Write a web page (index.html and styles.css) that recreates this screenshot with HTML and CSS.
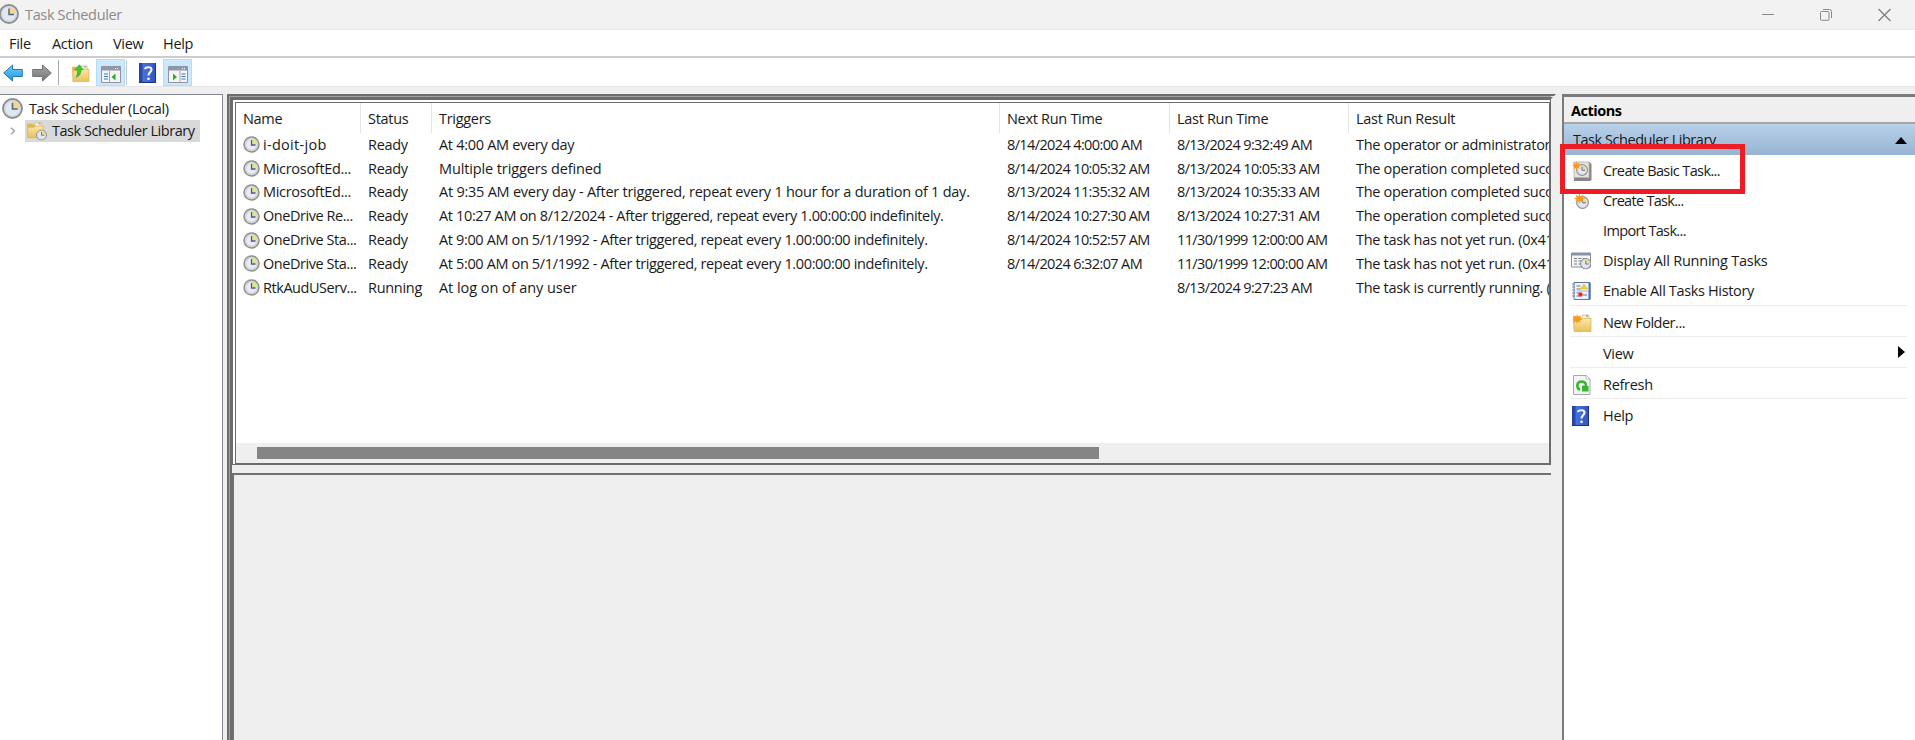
FILE: index.html
```
<!DOCTYPE html>
<html lang="en">
<head>
<meta charset="utf-8">
<title>Task Scheduler</title>
<link rel="stylesheet" href="styles.css">
</head>
<body>
<svg class="defs" width="0" height="0">
  <defs>
    <linearGradient id="gFolder" x1="0" y1="0" x2="0" y2="1"><stop offset="0" stop-color="#fbe8a6"/><stop offset="1" stop-color="#e9c05f"/></linearGradient>
    <linearGradient id="gBook" x1="0" y1="0" x2="1" y2="0"><stop offset="0" stop-color="#243f9c"/><stop offset=".2" stop-color="#2c4fb6"/><stop offset=".22" stop-color="#4a72dc"/><stop offset="1" stop-color="#2f53c0"/></linearGradient>
    <linearGradient id="gBlue" x1="0" y1="0" x2="0" y2="1"><stop offset="0" stop-color="#7cd0fa"/><stop offset="1" stop-color="#1795e6"/></linearGradient>
    <linearGradient id="gGrey" x1="0" y1="0" x2="0" y2="1"><stop offset="0" stop-color="#a8a8a8"/><stop offset="1" stop-color="#747474"/></linearGradient>
    <symbol id="clock" viewBox="0 0 20 20"><circle cx="10" cy="10" r="9" fill="#e3e8ee" stroke="#8b8d90" stroke-width="1.8"/><circle cx="10" cy="10" r="7.3" fill="#dfe8f3" stroke="#c9ced4" stroke-width=".8"/><path d="M10 10V3a7 7 0 0 1 7 7z" fill="#f8d68b"/><path d="M10 4.500V10.500H15" fill="none" stroke="#56677d" stroke-width="1.500"/></symbol>
    <symbol id="task" viewBox="0 0 17 17"><circle cx="8.500" cy="8.500" r="7.500" fill="#dcdcde" stroke="#929292" stroke-width="1.500"/><circle cx="8.500" cy="8.500" r="5.700" fill="#e9ecf2" stroke="#c6c6ca" stroke-width=".8"/><path d="M8.500 8.500V3a5.600 5.600 0 0 1 5.600 5.500z" fill="#d3ec86"/><path d="M8.500 4V9H12.500" fill="none" stroke="#5750a0" stroke-width="1.300"/></symbol>
    <symbol id="folder" viewBox="0 0 20 20"><path d="M1 3h7l1.500 2H18v13H2z" fill="#e4b654"/><path d="M10 2h7v5h-7z" fill="#f5f3e6" stroke="#d5b568" stroke-width=".7"/><path d="M14 3h2" stroke="#6fa6d8" stroke-width="1.300"/><path d="M2 7h7l2-1.500h8V18.500H2z" fill="url(#gFolder)" stroke="#ddb14e" stroke-width=".7"/></symbol>
    <symbol id="star" viewBox="0 0 12 12"><path d="M6 0l1 3.500L10.500 1.500 9 5l3 1-3 1.300 1.500 3.200L7 9 6 12 4.800 9 1.500 10.500 3 7.300 0 6l3-1L1.500 1.500 5 3.500z" fill="#f99a1c"/></symbol>
    <symbol id="help" viewBox="0 0 17 20"><path d="M0 0h17v20H0z" fill="url(#gBook)"/><path d="M0 19h17v1H0zM16 0h1v20h-1z" fill="#1d3376"/><path d="M6 6.200C6.300 3.700 12.500 3.300 12.500 6.600 12.500 9.300 9.500 9 9.500 12.500" fill="none" stroke="#eef2ff" stroke-width="2.200"/><circle cx="9.500" cy="15.800" r="1.400" fill="#eef2ff"/></symbol>
  </defs>
</svg>
<div class="window">
  <header class="titlebar">
    <svg class="app-icon" width="20" height="20"><use href="#clock"/></svg>
    <span class="app-title">Task Scheduler</span>
    <div class="controls">
      <svg width="12" height="14" viewBox="0 0 12 14"><path d="M0 6.500h12" stroke="#8a8a8a"/></svg>
      <svg width="12" height="14" viewBox="0 0 12 14" fill="none" stroke="#8a8a8a"><rect x=".5" y="3.500" width="8.500" height="8.800" rx="1"/><path d="M3 1.500h6.500a2 2 0 0 1 2 2V10"/></svg>
      <svg width="13" height="14" viewBox="0 0 13 14"><path d="M.5 1l12 12m0-12l-12 12" stroke="#7d7d7d" stroke-width="1.200"/></svg>
    </div>
  </header>
  <nav class="menubar"><span class="m-file">File</span><span class="m-action">Action</span><span class="m-view">View</span><span class="m-help">Help</span></nav>
  <div class="toolbar">
    <svg class="t-back" width="20" height="18" viewBox="0 0 20 18"><path d="M.7 9L9.500 1v4.500H19.300v7H9.500V17z" fill="url(#gBlue)" stroke="#2879ad" stroke-width="1"/></svg>
    <svg class="t-fwd" width="20" height="18" viewBox="0 0 20 18"><path d="M19.300 9L10.500 1v4.500H.7v7h9.800V17z" fill="url(#gGrey)" stroke="#747474" stroke-width="1"/></svg>
    <i class="t-sep"></i>
    <svg class="t-up" width="19" height="19" viewBox="0 0 20 20"><use href="#folder" width="20" height="20"/><path d="M4.500 14C8 13 9.500 10 9.500 6H12L7.800.8 3 6h2.800C6 9 5.500 11.500 4.500 14z" transform="translate(1 0)" fill="#3fc52f" stroke="#2da322" stroke-width=".6"/></svg>
    <span class="t-on"><svg width="20" height="17" viewBox="0 0 20 17"><path d="M.5.5h19v16H.5z" fill="#f5f5f5" stroke="#8b949f"/><path d="M1 1h18v3.500H1z" fill="#8e99a8"/><path d="M14 2.500h1m1 0h1" stroke="#fff"/><path d="M3 8h4m-4 2.500h4M3 13h4" stroke="#3f76b5" stroke-width="1.200"/><path d="M8.500 5v11.500" stroke="#9da6b2"/><path d="M14.500 7.500v7l-4-3.500z" fill="#2ead27"/></svg></span>
    <i class="t-sep2"></i>
    <svg class="t-help" width="17" height="20"><use href="#help"/></svg>
    <span class="t-on"><svg width="20" height="17" viewBox="0 0 20 17"><path d="M.5.5h19v16H.5z" fill="#f5f5f5" stroke="#8b949f"/><path d="M1 1h18v3.500H1z" fill="#8e99a8"/><path d="M14 2.500h1m1 0h1" stroke="#fff"/><path d="M13.500 8h4m-4 2.500h4m-4 2.500h4" stroke="#3f76b5" stroke-width="1.200"/><path d="M12 5v11.500" stroke="#9da6b2"/><path d="M5 7.500v7l4-3.500z" fill="#2ead27"/></svg></span>
  </div>
  <main class="panes">
    <aside class="tree">
      <div class="root"><svg width="21" height="21"><use href="#clock"/></svg><span class="tree-root">Task Scheduler (Local)</span></div>
      <div class="child"><svg class="chev" width="6" height="8" viewBox="0 0 6 8"><path d="M1 .8L4.500 4 1 7.200" fill="none" stroke="#999" stroke-width="1.200"/></svg>
        <div class="sel"><svg width="21" height="20" viewBox="0 0 21 20"><use href="#folder" width="18" height="18"/><use href="#clock" x="10" y="8.500" width="11" height="11"/></svg><span class="tree-lib">Task Scheduler Library</span></div></div>
    </aside>
    <section class="center">
      <div class="list">
        <div class="row head"><span>Name</span><span>Status</span><span>Triggers</span><span>Next Run Time</span><span>Last Run Time</span><span>Last Run Result</span></div>
        <div class="rows">
          <div class="row"><span class="name loose"><svg><use href="#task"/></svg>i-doit-job</span><span>Ready</span><span>At 4:00 AM every day</span><span class="date">8/14/2024 4:00:00 AM</span><span class="date">8/13/2024 9:32:49 AM</span><span class="result">The operator or administrator</span></div>
          <div class="row"><span class="name"><svg><use href="#task"/></svg>MicrosoftEd...</span><span>Ready</span><span class="trig-words">Multiple triggers defined</span><span class="date">8/14/2024 10:05:32 AM</span><span class="date">8/13/2024 10:05:33 AM</span><span class="result">The operation completed successfully.</span></div>
          <div class="row"><span class="name"><svg><use href="#task"/></svg>MicrosoftEd...</span><span>Ready</span><span class="trig-daily">At 9:35 AM every day - After triggered, repeat every 1 hour for a duration of 1 day.</span><span class="date">8/13/2024 11:35:32 AM</span><span class="date">8/13/2024 10:35:33 AM</span><span class="result">The operation completed successfully.</span></div>
          <div class="row"><span class="name tight"><svg><use href="#task"/></svg>OneDrive Re...</span><span>Ready</span><span class="trig">At 10:27 AM on 8/12/2024 - After triggered, repeat every 1.00:00:00 indefinitely.</span><span class="date">8/14/2024 10:27:30 AM</span><span class="date">8/13/2024 10:27:31 AM</span><span class="result">The operation completed successfully.</span></div>
          <div class="row"><span class="name tight"><svg><use href="#task"/></svg>OneDrive Sta...</span><span>Ready</span><span class="trig">At 9:00 AM on 5/1/1992 - After triggered, repeat every 1.00:00:00 indefinitely.</span><span class="date">8/14/2024 10:52:57 AM</span><span class="date">11/30/1999 12:00:00 AM</span><span class="result">The task has not yet run. (0x41303)</span></div>
          <div class="row"><span class="name tight"><svg><use href="#task"/></svg>OneDrive Sta...</span><span>Ready</span><span class="trig">At 5:00 AM on 5/1/1992 - After triggered, repeat every 1.00:00:00 indefinitely.</span><span class="date">8/14/2024 6:32:07 AM</span><span class="date">11/30/1999 12:00:00 AM</span><span class="result">The task has not yet run. (0x41303)</span></div>
          <div class="row"><span class="name tight"><svg><use href="#task"/></svg>RtkAudUServ...</span><span>Running</span><span class="trig-logon">At log on of any user</span><span class="date"></span><span class="date">8/13/2024 9:27:23 AM</span><span class="result">The task is currently running. (0x41301)</span></div>
        </div>
        <div class="scroll"><div class="thumb"></div></div>
      </div>
      <div class="detail"></div>
    </section>
    <aside class="actions">
      <h2>Actions</h2>
      <div class="group"><span>Task Scheduler Library</span><svg width="12" height="7" viewBox="0 0 12 7"><path d="M6 0l6 7H0z"/></svg></div>
      <ul>
        <li><svg width="20" height="20" viewBox="0 0 20 20"><path d="M2.500 1h15l2 2v16l-1.500 1H2z" fill="#8c8583"/><path d="M2 1h15v15.500H2z" fill="#e6e3e0" stroke="#b4aeab" stroke-width=".8"/><use href="#clock" x="4" y="3" width="12" height="12"/><use href="#star" width="9" height="9"/></svg><span class="a-basic">Create Basic Task...</span></li>
        <li><svg width="20" height="20" viewBox="0 0 20 20"><use href="#clock" x="4" y="5" width="13" height="13"/><use href="#star" x="2" y="2" width="11" height="11"/></svg><span class="a-create">Create Task...</span></li>
        <li><svg width="20" height="20"></svg><span class="a-import">Import Task...</span></li>
        <li><svg class="wide-icon" width="20" height="20" viewBox="0 0 20 20"><path d="M.5 2h19v14H.5z" fill="#f4f6f8" stroke="#8a8f96"/><path d="M1 2h18v2.500H1z" fill="#8593a8"/><path d="M3 7.500h3m1.500 0h3m1.500 0h4M3 10h3m1.500 0h3M3 13h3m1.500 0h3" stroke="#747c87"/><use href="#clock" x="9" y="7" width="11.500" height="11.500"/></svg><span class="a-display">Display All Running Tasks</span></li>
        <li class="end"><svg width="20" height="20" viewBox="0 0 20 20"><path d="M2 1.500h16v17H2z" fill="#f1f4fa" stroke="#5877ae"/><path d="M16.500 2h2v16h-2z" fill="#4672b8"/><path d="M0 3h3M0 6h3M0 9h3M0 12h3M0 15h3" stroke="#818b99"/><path d="M4.500 5h4m-4 3h4m-4 4h3m-3 3h3" stroke="#6479a0"/><path d="M12 3l3.500 5h-7z" fill="#f5cf27" stroke="#dca91d" stroke-width=".5"/><path d="M5 10h11" stroke="#aab4c5"/><circle cx="8.500" cy="13.500" r="2.200" fill="#dd302b"/><path d="M11 14h4" stroke="#6479a0"/></svg><span class="a-enable">Enable All Tasks History</span></li>
        <li class="sep"><svg width="20" height="20" viewBox="0 0 20 20"><use href="#folder" width="20" height="20"/><use href="#star" y="1" width="10" height="10"/></svg><span class="a-new">New Folder...</span></li>
        <li class="sep"><svg width="20" height="20"></svg><span class="a-view">View</span><svg class="sub" width="7" height="12" viewBox="0 0 7 12"><path d="M0 0l7 6-7 6z"/></svg></li>
        <li class="sep"><svg width="20" height="20" viewBox="0 0 20 20"><path d="M1.500.5h13L18 4v15.500H1.500z" fill="#f4f5f6" stroke="#a3aaae"/><path d="M14 .5V4h4" fill="#fff" stroke="#a3aaae" stroke-width=".7"/><path d="M8 15C4 13 4.500 6.500 9.500 6.500c4.500 0 5.500 4 3.500 6.500" fill="none" stroke="#35b62d" stroke-width="2.500"/><path d="M10 10.500L16.500 11v5.500H10z" fill="#35b62d"/></svg><span class="a-refresh">Refresh</span></li>
        <li class="sep"><svg width="20" height="20" viewBox="0 0 20 20"><use href="#help" width="17" height="20"/></svg><span class="a-help">Help</span></li>
      </ul>
      <div class="highlight"></div>
    </aside>
  </main>
</div>
</body>
</html>
```
FILE: styles.css
```
* { box-sizing: border-box; }
body { margin: 0; font: 14.5px/20px "Open Sans", "Noto Sans", sans-serif; color: #1a1a1a; letter-spacing: -0.3px; overflow: hidden; }
.defs { position: absolute; }
svg { display: block; flex: none; }
span { white-space: nowrap; }
.window { width: 1915px; height: 740px; display: flex; flex-direction: column; background: #efefef; }

.titlebar { height: 30px; display: flex; align-items: center; background: #f2f2f2; border-bottom: 1px solid #e9e9e9; color: #8b8b8b; padding-right: 24px; }
.app-icon { margin: -2px 0 0 -1px; }
.app-title { margin-left: 6px; letter-spacing: -0.35px; }
.controls { margin-left: auto; display: flex; gap: 46px; }
.menubar { height: 28px; display: flex; align-items: center; background: #fff; border-bottom: 2px solid #ccccd0; padding: 2px 0 0 9px; }
.m-file { width: 43px; }
.m-action { width: 61px; }
.m-view { width: 50px; }
.toolbar { height: 29px; display: flex; align-items: center; background: #fff; padding: 1px 0 0 3px; border-bottom: 1px solid #e6e6e6; }
.t-fwd { margin-left: 9px; }
.t-sep { width: 1px; height: 25px; margin-left: 6px; background: #aaa; }
.t-up { margin: 1px 6px 0 12px; }
.t-on { width: 29px; height: 27px; display: flex; align-items: center; justify-content: center; background: #cce8ff; border: 1px solid #b5dcf8; padding-top: 4px; }
.t-sep2 { width: 1px; height: 25px; margin: 0 12px 0 1px; background: #c9c9c9; }
.t-help { margin-right: 7px; }

.panes { flex: 1; min-height: 0; display: flex; padding-top: 7px; }
.tree { width: 223px; background: #fff; border-top: 1px solid #828790; border-right: 1px solid #828790; padding-top: 2px; }
.root { height: 23px; display: flex; align-items: center; padding-left: 2px; gap: 6px; }
.tree-root { letter-spacing: -0.43px; }
.tree-lib { letter-spacing: -0.47px; }
.child { height: 22px; display: flex; align-items: center; }
.chev { margin: 0 9px 0 10px; }
.sel { width: 175px; height: 22px; display: flex; align-items: center; gap: 5px; background: #d9d9d9; padding-left: 1px; }

.center { width: 1329px; margin-left: 4px; display: flex; flex-direction: column; border: 5px double #6c6c6c; border-right: 5px solid #efefef; border-bottom: 0; background: linear-gradient(#efefef, #efefef) padding-box, linear-gradient(#a2a2a2, #a2a2a2) border-box; }
.list { width: 1319px; height: 366px; display: flex; flex-direction: column; background: #fff; border: double #6c6c6c; border-width: 4px 2px 2px 4px; overflow: hidden; }
.row { display: grid; grid-template-columns: 125px 71px 568px 170px 179px 400px; height: 23.8px; align-items: center; }
.row span { padding-left: 7px; }
.row > .name { display: flex; align-items: center; gap: 3px; }
.row > .loose { letter-spacing: 0.3px; }
.row > .tight { letter-spacing: -0.45px; }
.name svg { width: 17px; height: 17px; }
.trig { letter-spacing: -0.36px; }
.trig-words { letter-spacing: -0.12px; }
.trig-daily { letter-spacing: -0.24px; }
.trig-logon { letter-spacing: -0.05px; }
.date { letter-spacing: -0.62px; }
.head { height: 30px; }
.head span { height: 30px; line-height: 32px; border-right: 1px solid #e5e5e5; }
.rows { flex: 1; }
.scroll { height: 20px; background: #efefef; padding: 4px 0 0 21px; }
.thumb { width: 842px; height: 12px; background: #858585; }
.detail { flex: 1; width: 1319px; margin-top: 8px; background: #efefef; border: solid #707070; border-width: 2px 0 0 2px; }

.actions { position: relative; width: 353px; margin-left: 6px; background: #fff; border: solid #7c7c7c; border-width: 3px 0 0 2px; }
h2 { margin: 0; height: 27px; font-size: 14.5px; line-height: 28px; padding-left: 7px; background: #efefef; border-bottom: 2px solid #a5a5a5; letter-spacing: -0.5px; color: #000; }
.group { height: 31px; display: flex; align-items: center; justify-content: space-between; padding: 1px 8px 0 9px; background: linear-gradient(#b9d1ea, #98b4d2); letter-spacing: -0.46px; }
ul { list-style: none; margin: 0; padding: 1px 8px 0 6px; }
li { height: 30px; display: flex; align-items: center; gap: 11px; padding-left: 2px; }
li.end { height: 29px; }
li.sep { height: 31.1px; border-top: 1px solid #ededed; padding-top: 3px; }
.wide-icon { margin: 0 1px 0 -1px; }
.a-basic { letter-spacing: -0.6px; }
.a-create { letter-spacing: -0.7px; }
.a-import { letter-spacing: -0.65px; }
.a-display { letter-spacing: -0.23px; }
.a-enable { letter-spacing: -0.35px; }
.a-new { letter-spacing: -0.48px; }
.sub { margin: -4px 2px 0 auto; }
.highlight { position: absolute; left: -4px; top: 47px; width: 185px; height: 50px; border: 5px solid #ee1c24; }
```
